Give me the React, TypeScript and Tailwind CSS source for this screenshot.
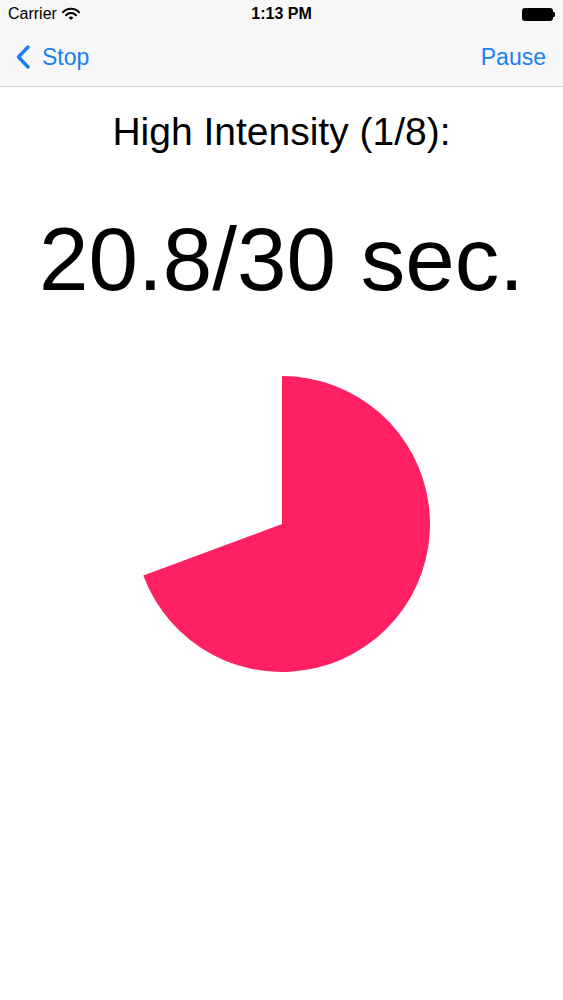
import React from "react";

function Pie() {
  const r = 148;
  const frac = 20.8 / 30;
  const a = frac * 2 * Math.PI;
  const x = r + r * Math.sin(a);
  const y = r - r * Math.cos(a);
  const large = frac > 0.5 ? 1 : 0;
  const d = `M ${r} ${r} L ${r} 0 A ${r} ${r} 0 ${large} 1 ${x} ${y} Z`;
  return (
    <svg width={296} height={296} viewBox="0 0 296 296">
      <path d={d} fill="#fe2063" />
    </svg>
  );
}

export default function App() {
  return (
    <div
      className="w-[563px] h-[1000px] bg-white text-black overflow-hidden"
      style={{ fontFamily: '"Liberation Sans", Arial, sans-serif' }}
    >
      <div className="bg-[#f7f7f8] border-b border-[#d4d4d6]">
        <div className="h-[28px] flex items-center justify-between px-[8px] relative">
          <div className="flex items-center gap-[4px]">
            <span className="text-[16px] leading-none">Carrier</span>
            <svg width="18" height="14" viewBox="0 0 18 14" className="ml-[1px]">
              <path d="M1 5.2 A11 11 0 0 1 17 5.2" fill="none" stroke="#000" strokeWidth="2" strokeLinecap="round" />
              <path d="M4 8.2 A7 7 0 0 1 14 8.2" fill="none" stroke="#000" strokeWidth="2" strokeLinecap="round" />
              <path d="M9 13 L6.6 10.6 A3.4 3.4 0 0 1 11.4 10.6 Z" fill="#000" />
            </svg>
          </div>
          <span className="absolute left-1/2 -translate-x-1/2 text-[16px] font-bold leading-none">1:13 PM</span>
          <div className="flex items-center">
            <div className="w-[31px] h-[13px] rounded-[3px] bg-black" />
            <div className="w-[2px] h-[5px] bg-black rounded-r-[1px]" />
          </div>
        </div>
        <div className="h-[58px] flex items-center justify-between pl-[16px] pr-[17px] text-[#1a7ef5]">
          <div className="flex items-center gap-[12px]">
            <svg width="14" height="24" viewBox="0 0 14 24">
              <path d="M12 2 L2.5 12 L12 22" fill="none" stroke="#1a7ef5" strokeWidth="3.4" strokeLinecap="round" strokeLinejoin="round" />
            </svg>
            <span className="text-[23px] leading-none">Stop</span>
          </div>
          <span className="text-[23px] leading-none">Pause</span>
        </div>
      </div>
      <div className="flex flex-col items-center">
        <div className="mt-[25px] text-[39px] leading-none">High Intensity (1/8):</div>
        <div className="mt-[64px] text-[89px] leading-none">20.8/30 sec.</div>
        <div className="mt-[72px]">
          <Pie />
        </div>
      </div>
    </div>
  );
}
